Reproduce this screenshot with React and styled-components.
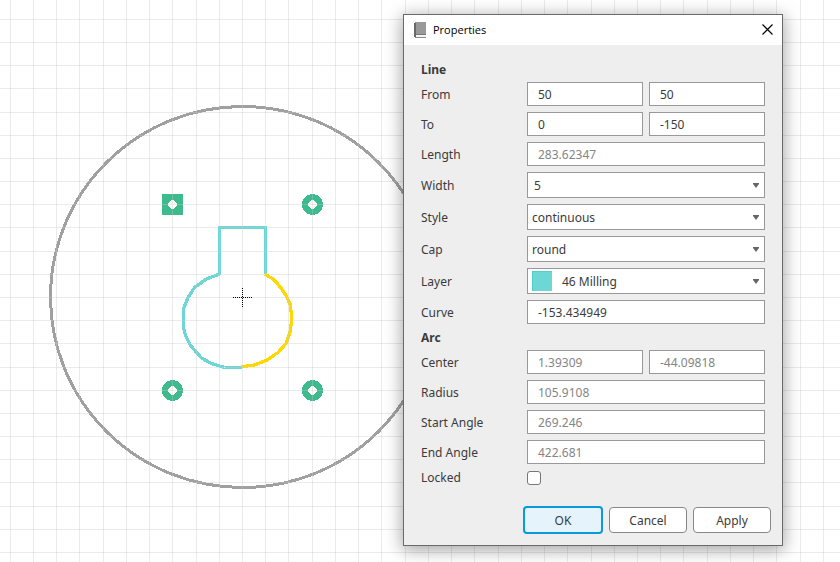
import React, { useState } from 'react';
import styled, { createGlobalStyle } from 'styled-components';

const GlobalStyle = createGlobalStyle`
    * {
        box-sizing: border-box;
    }

    body {
        margin: 0;
        background: #ffffff;
        color: #3b3b3b;
        font-family: 'Noto Sans', sans-serif;
        font-size: 12px;
    }
`;


const Workspace = styled.main`
    position: relative;
    min-height: 100vh;
    overflow: hidden;
`;

const Canvas = styled.svg`
    display: block;
    width: 100%;
    height: 100vh;
    shape-rendering: crispEdges;
`;


// Floating window over the board
const Dialog = styled.section`
    position: absolute;
    top: 14px;
    left: 403px;
    width: 380px;
    border: 1px solid #6a6a6a;
    background: #eeeeee;
    box-shadow: 0 3px 16px 1px rgba(0, 0, 0, 0.36);
`;

const TitleBar = styled.header`
    display: flex;
    align-items: center;
    gap: 7px;
    height: 30px;
    padding: 0 6px 0 10px;
    background: #ffffff;
`;

const Title = styled.h1`
    flex: 1;
    margin: 0;
    color: #000000;
    font-family: 'Open Sans', sans-serif;
    font-size: 11px;
    font-weight: 400;
    line-height: 16px;
`;

const CloseButton = styled.button`
    display: flex;
    padding: 2px 3px 3px;
    border: none;
    background: none;
`;

const Fields = styled.div`
    display: grid;
    grid-template-columns: 100px minmax(0, 1fr);
    gap: 6px;
    align-items: center;
    padding: 17px 17px 0;
`;

const Heading = styled.h2`
    grid-column: 1 / -1;
    margin: 0;
    padding-top: 2px;
    font-size: 12px;
    font-weight: 700;
    line-height: 12px;
`;

const Label = styled.label`
    line-height: 15px;
`;

const Inputs = styled.div`
    display: flex;
    gap: 6px;
`;

const TextInput = styled.input`
    flex: 1;
    width: 100%;
    min-width: 0;
    height: 24px;
    padding: 0 10px;
    border: 1px solid #999999;
    background: #ffffff;
    color: ${props => (props.readOnly ? '#858585' : '#3b3b3b')};
    font: inherit;
    outline: none;
`;

const SelectBox = styled.div`
    display: grid;
    align-items: center;

    > * {
        grid-area: 1 / 1;
    }
`;

const Select = styled.select`
    appearance: none;
    width: 100%;
    height: 26px;
    padding: 0 20px 0 ${props => props.$inset}px;
    border: 1px solid #999999;
    border-radius: 0;
    background: #ffffff;
    color: #3b3b3b;
    font: inherit;
    outline: none;
`;

const Arrow = styled.svg`
    justify-self: end;
    margin-right: 6px;
    pointer-events: none;
`;

const Swatch = styled.span`
    width: 20px;
    height: 20px;
    margin-left: 5px;
    border: 1px solid #50cfcc;
    border-width: 1px 0 0 1px;
    background: #6dd7d6;
    pointer-events: none;
`;

const Checkbox = styled.input`
    appearance: none;
    width: 14px;
    height: 14px;
    margin: 0;
    border: 1px solid #777777;
    border-radius: 3px;
    background: #ffffff;

    &:checked {
        box-shadow: inset 0 0 0 3px #ffffff;
        background: #0a99dc;
    }
`;

const Actions = styled.footer`
    display: flex;
    align-items: center;
    justify-content: flex-end;
    gap: 6px;
    padding: 21px 11px 11px;
`;

const Button = styled.button`
    width: ${props => (props.$primary ? 80 : 78)}px;
    height: ${props => (props.$primary ? 28 : 26)}px;
    padding: 0;
    border: ${props => (props.$primary ? '2px solid #0a99dc' : '1px solid #888888')};
    border-radius: 4px;
    background: ${props => (props.$primary ? '#e5f3fc' : '#ffffff')};
    color: #3b3b3b;
    font: inherit;
`;


const gridX = [
    10, 33, 56, 79, 103, 126, 149, 172, 196, 219, 242, 265, 288, 312, 335, 358, 381, 405,
    428, 451, 474, 498, 521, 544, 567, 591, 614, 637, 660, 683, 707, 730, 753, 776, 800, 823,
];
const gridY = [
    19, 42, 65, 88, 112, 135, 158, 181, 204, 227, 251, 274, 297, 320, 343, 367, 390, 413,
    436, 459, 482, 506, 529, 552,
];

function Pad({ x, y, square }) {
    return (
        <g transform={`translate(${x} ${y})`}>
            {square
                ? <rect x="-10.5" y="-10.5" width="21" height="21" fill="#3dbb8f" />
                : <circle r="10.5" fill="#3dbb8f" />}
            <path d="M-1-4.5h2l3.5 3.5v2l-3.5 3.5h-2l-3.5-3.5v-2z" fill="#ffffff" />
        </g>
    );
}

function Board() {
    return (
        <Canvas role="img" aria-label="Board outline">
            <ellipse cx="242.5" cy="297" rx="192" ry="190.5" fill="none" stroke="#a0a0a0" strokeWidth="3" />
            <g fill="none" strokeWidth="3.3">
                <path
                    stroke="#6dd7d6"
                    strokeLinejoin="round"
                    d="M265.5 274V227.5H219.5V274L206.5 279 194.5 287.5 188 297.5 183.5 309V327.5L185.5 335.5 190.5 345.5 201.5 358 211.5 363.5 224.5 367.5H242"
                />
                <path
                    stroke="#ffd800"
                    d="M265 274L274 279.7 281.3 288.3 286 295.5 290 304 291.5 314V321.5L290 332 286.3 343 278 352.5 266.5 360.3 254.5 365 241.5 366.7"
                />
            </g>
            <Pad x={172.5} y={204.5} square />
            <Pad x={312.5} y={204.5} />
            <Pad x={172.5} y={390.5} />
            <Pad x={312.5} y={390.5} />
            <g fill="#c8c8c8" fillOpacity="0.36">
                {gridX.map(x => <rect key={x} x={x} y="0" width="1" height="100%" />)}
                {gridY.map(y => <rect key={y} x="0" y={y} width="100%" height="1" />)}
            </g>
            <path d="M233 297.5H252M242.5 288V307" stroke="#000000" strokeDasharray="1 1" />
        </Canvas>
    );
}


function BookIcon() {
    return (
        <svg width="12" height="16" shapeRendering="crispEdges" aria-hidden="true">
            <path d="M1 0H12V12H1z" fill="#999999" />
            <path d="M0 1H2V15H0z" fill="#686868" />
            <path d="M2 12H12V13H2z" fill="#777777" />
            <path d="M2 13H12V15H2z" fill="#f4f4f4" />
            <path d="M1 15H12V16H1z" fill="#8c8c8c" />
        </svg>
    );
}

// One row with one or two text boxes
function TextRow({ label, values, readOnly }) {
    const id = label.toLowerCase().replace(' ', '-');
    return (
        <>
            <Label htmlFor={id}>{label}</Label>
            <Inputs>
                {values.map((value, i) => (
                    <TextInput
                        key={i}
                        id={i === 0 ? id : undefined}
                        aria-label={i === 0 ? undefined : `${label} Y`}
                        defaultValue={value}
                        readOnly={readOnly}
                    />
                ))}
            </Inputs>
        </>
    );
}

function SelectRow({ label, options, inset = 4, swatch }) {
    const id = label.toLowerCase();
    return (
        <>
            <Label htmlFor={id}>{label}</Label>
            <SelectBox>
                <Select id={id} $inset={inset}>
                    {options.map(option => <option key={option}>{option}</option>)}
                </Select>
                {swatch && <Swatch />}
                <Arrow width="6" height="5" aria-hidden="true">
                    <path d="M0 0H6V1L3 5L0 1z" fill="#666666" />
                </Arrow>
            </SelectBox>
        </>
    );
}


export default function App() {
    const [open, setOpen] = useState(true);
    const close = () => setOpen(false);

    return (
        <>
            <GlobalStyle />
            <Workspace>
                <Board />
                {open && (
                    <Dialog role="dialog" aria-labelledby="title">
                        <TitleBar>
                            <BookIcon />
                            <Title id="title">Properties</Title>
                            <CloseButton type="button" aria-label="Close" onClick={close}>
                                <svg width="11" height="11" stroke="#000000" strokeWidth="1.2">
                                    <path d="M0.5 0.5L10.5 10.5M10.5 0.5L0.5 10.5" />
                                </svg>
                            </CloseButton>
                        </TitleBar>
                        <Fields>
                            <Heading>Line</Heading>
                            <TextRow label="From" values={['50', '50']} />
                            <TextRow label="To" values={['0', '-150']} />
                            <TextRow label="Length" values={['283.62347']} readOnly />
                            <SelectRow label="Width" options={['5', '10']} inset={6} />
                            <SelectRow label="Style" options={['continuous', 'longdash']} />
                            <SelectRow label="Cap" options={['round', 'flat']} />
                            <SelectRow label="Layer" options={['46 Milling', '20 Dimension']} inset={34} swatch />
                            <TextRow label="Curve" values={['-153.434949']} />
                            <Heading>Arc</Heading>
                            <TextRow label="Center" values={['1.39309', '-44.09818']} readOnly />
                            <TextRow label="Radius" values={['105.9108']} readOnly />
                            <TextRow label="Start Angle" values={['269.246']} readOnly />
                            <TextRow label="End Angle" values={['422.681']} readOnly />
                            <Label htmlFor="locked">Locked</Label>
                            <Checkbox id="locked" type="checkbox" />
                        </Fields>
                        <Actions>
                            <Button type="button" $primary onClick={close}>OK</Button>
                            <Button type="button" onClick={close}>Cancel</Button>
                            <Button type="button">Apply</Button>
                        </Actions>
                    </Dialog>
                )}
            </Workspace>
        </>
    );
}
